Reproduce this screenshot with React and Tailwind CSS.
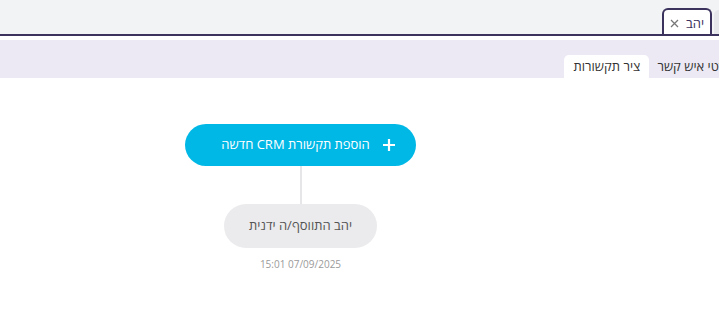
export default function App() {
  return (
    <div className="h-[314px] w-[719px] overflow-hidden bg-white" style={{ fontFamily: '"Open Sans", "DejaVu Sans", sans-serif' }}>
      {/* top tabs */}
      <div className="h-[36px] bg-[#f2f3f5] border-b-2 border-[#3b325d] flex flex-row-reverse items-end overflow-hidden" dir="ltr">
        <div className="w-[5px] h-[26px] bg-[#e6e7eb] rounded-tl-[5px] -mb-[2px] shrink-0 ml-[2px]"></div>
        <div className="h-[28px] w-[50px] shrink-0 bg-white border-2 border-b-0 border-[#3b325d] rounded-t-[6px] -mb-[2px] flex items-center justify-center gap-[7px]" dir="rtl">
          <span className="text-[13px] text-[#3b325d] leading-none">יהב</span>
          <svg width="9" height="9" viewBox="0 0 9 9">
            <path d="M1 1l7 7M8 1l-7 7" stroke="#777" strokeWidth="1.3" />
          </svg>
        </div>
      </div>
      <div className="h-[4px] bg-white"></div>
      {/* section tabs */}
      <div className="h-[38px] bg-[#ece9f4] flex items-end overflow-hidden" dir="rtl">
        <div className="h-[23px] -mr-[14px] pl-[8px] flex items-center text-[13px] text-[#333] whitespace-nowrap shrink-0">פרטי איש קשר</div>
        <div className="h-[23px] w-[85px] bg-white rounded-t-[5px] flex items-center justify-center text-[13px] text-[#333] whitespace-nowrap shrink-0">ציר תקשורות</div>
      </div>
      {/* timeline */}
      <div className="w-[601px] flex flex-col items-center pt-[46px]">
        <button className="h-[42px] w-[231px] rounded-full bg-[#00b8e6] text-white flex items-center justify-center relative" dir="rtl">
          <span className="text-[13px] mr-[10px]">הוספת תקשורת CRM חדשה</span>
          <svg className="absolute left-[198px] top-[15px]" width="12" height="12" viewBox="0 0 12 12">
            <path d="M6 1v10M1 6h10" stroke="white" strokeWidth="2.2" strokeLinecap="square" />
          </svg>
        </button>
        <div className="w-[2px] h-[38px] bg-[#e6e6e8]"></div>
        <div className="h-[44px] w-[153px] rounded-full bg-[#ebebed] flex items-center justify-center" dir="rtl">
          <span className="text-[13px] text-[#555]">יהב התווסף/ה ידנית</span>
        </div>
        <div className="mt-[9px] text-[10px] text-[#9a9a9a]">15:01 07/09/2025</div>
      </div>
    </div>
  );
}
